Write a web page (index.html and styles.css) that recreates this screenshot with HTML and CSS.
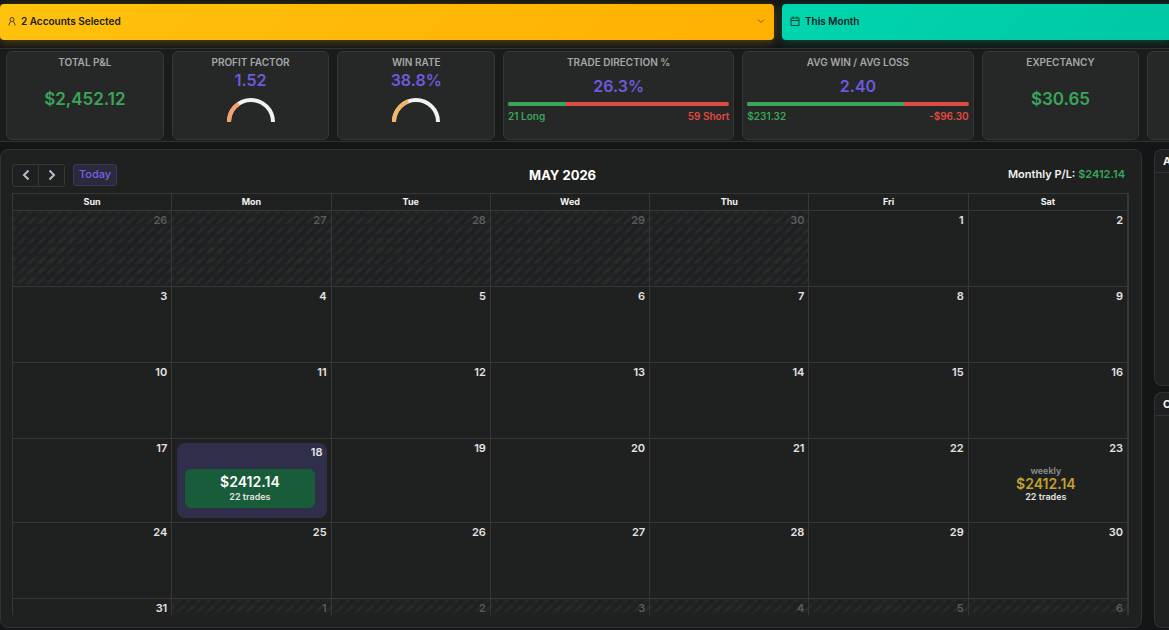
FILE: index.html
```html
<!DOCTYPE html>
<html lang="en">
<head>
  <meta charset="UTF-8">
  <meta name="viewport" content="width=device-width, initial-scale=1.0">
  <title>Trading Dashboard</title>
  <link rel="stylesheet" href="styles.css">
</head>
<body>

<div class="filters">
  <button class="filter accounts">
    <svg class="icon-user" viewBox="0 0 8 10"><circle cx="4" cy="3.500" r="2"/><path d="M1 9.500V8.500l1.500-3M7 9.500V8.500l-1.500-3"/></svg>
    <span>2 Accounts Selected</span>
    <svg class="icon-caret" viewBox="0 0 8 6"><path d="M1 1.500l3 3 3-3"/></svg>
  </button>
  <button class="filter period">
    <svg class="icon-calendar" viewBox="0 0 10 10"><path d="M1 2h8v7.500H1zM1 4.500h8M3 .5v2.500M7 .5v2.500"/></svg>
    <span>This Month</span>
  </button>
</div>

<div class="stats">
  <div class="stats-row">
    <div class="card">
      <div class="label">TOTAL P&amp;L</div>
      <div class="value big green">$2,452.12</div>
    </div>
    <div class="card">
      <div class="label">PROFIT FACTOR</div>
      <div class="value">1.52</div>
      <svg class="gauge" viewBox="0 0 48 25">
        <path class="track" d="M2 25A22 22 0 0 1 46 25"/>
        <path class="fill coral" pathLength="100" stroke-dasharray="31 100" d="M2 25A22 22 0 0 1 46 25"/>
      </svg>
    </div>
    <div class="card">
      <div class="label">WIN RATE</div>
      <div class="value">38.8%</div>
      <svg class="gauge" viewBox="0 0 48 25">
        <path class="track" d="M2 25A22 22 0 0 1 46 25"/>
        <path class="fill amber" pathLength="100" stroke-dasharray="38.8 100" d="M2 25A22 22 0 0 1 46 25"/>
      </svg>
    </div>
    <div class="card">
      <div class="label">TRADE DIRECTION %</div>
      <div class="value mid">26.3%</div>
      <div class="bar"><div class="bar-fill" style="width: 26.3%"></div></div>
      <div class="bar-labels"><span class="green">21 Long</span><span class="red">59 Short</span></div>
    </div>
    <div class="card">
      <div class="label">AVG WIN / AVG LOSS</div>
      <div class="value mid">2.40</div>
      <div class="bar"><div class="bar-fill" style="width: 70.6%"></div></div>
      <div class="bar-labels"><span class="green">$231.32</span><span class="red">-$96.30</span></div>
    </div>
    <div class="card">
      <div class="label">EXPECTANCY</div>
      <div class="value big green">$30.65</div>
    </div>
    <div class="card"></div>
  </div>
</div>

<div class="main">
  <div class="panel calendar">
    <div class="toolbar">
      <div class="nav">
        <div class="nav-group">
          <button aria-label="Previous month"><svg viewBox="0 0 8 12"><path d="M6.500 1.500L2 6l4.500 4.500"/></svg></button>
          <button aria-label="Next month"><svg viewBox="0 0 8 12"><path d="M1.500 1.500L6 6l-4.500 4.500"/></svg></button>
        </div>
        <button class="today">Today</button>
      </div>
      <h1>MAY 2026</h1>
      <div class="monthly">Monthly P/L: <span class="green">$2412.14</span></div>
    </div>

    <div class="month">
      <table>
        <thead>
          <tr><th>Sun</th><th>Mon</th><th>Tue</th><th>Wed</th><th>Thu</th><th>Fri</th><th>Sat</th></tr>
        </thead>
        <tbody>
          <tr><td class="other">26</td><td class="other">27</td><td class="other">28</td><td class="other">29</td><td class="other">30</td><td>1</td><td>2</td></tr>
          <tr><td>3</td><td>4</td><td>5</td><td>6</td><td>7</td><td>8</td><td>9</td></tr>
          <tr><td>10</td><td>11</td><td>12</td><td>13</td><td>14</td><td>15</td><td>16</td></tr>
          <tr class="tall">
            <td>17</td>
            <td class="active">
              <div class="day-box">
                18
                <div class="trades">
                  <strong>$2412.14</strong>
                  <span>22 trades</span>
                </div>
              </div>
            </td>
            <td>19</td><td>20</td><td>21</td><td>22</td>
            <td>
              23
              <div class="weekly">
                <span class="muted">weekly</span>
                <strong>$2412.14</strong>
                <span>22 trades</span>
              </div>
            </td>
          </tr>
          <tr><td>24</td><td>25</td><td>26</td><td>27</td><td>28</td><td>29</td><td>30</td></tr>
          <tr><td>31</td><td class="other">1</td><td class="other">2</td><td class="other">3</td><td class="other">4</td><td class="other">5</td><td class="other">6</td></tr>
        </tbody>
      </table>
    </div>
  </div>

  <div class="side">
    <div class="panel"><h2>A</h2></div>
    <div class="panel"><h2>C</h2></div>
  </div>
</div>

</body>
</html>
```

FILE: styles.css
```css
* {
  box-sizing: border-box;
}

body {
  margin: 0;
  height: 100vh;
  padding: 4px 0 2px;
  display: flex;
  flex-direction: column;
  overflow: hidden;
  background: #131616;
  color: #f2f2f2;
  font-family: Inter, "Liberation Sans", sans-serif;
  font-size: 11px;
}

button {
  font-family: inherit;
  cursor: pointer;
}

svg {
  fill: none;
  stroke: currentColor;
}

.green {
  color: #3aa65a;
}

.red {
  color: #e5483f;
}

/* Filters */
.filters {
  display: grid;
  grid-template-columns: 2fr 1fr;
  gap: 8px;
  margin-bottom: 8px;
}

.filter {
  display: flex;
  align-items: center;
  gap: 5px;
  height: 36px;
  padding: 0 8px 2px;
  border: none;
  color: #14201c;
  font-size: 10px;
  font-weight: 600;
}

.accounts {
  border-radius: 4px;
  background: linear-gradient(135deg, #ffc20d, #ffb000);
  box-shadow: 0 2px 10px rgba(255, 180, 0, 0.3);
}

.period {
  border-radius: 4px 0 0 4px;
  background: linear-gradient(135deg, #00d6ae, #00c8a4);
  box-shadow: 0 2px 10px rgba(0, 210, 170, 0.25);
}

.icon-user {
  width: 8px;
  height: 10px;
  opacity: 0.8;
}

.icon-calendar {
  width: 10px;
  height: 10px;
  opacity: 0.8;
}

.icon-caret {
  width: 8px;
  height: 6px;
  margin-left: auto;
  margin-right: 1px;
  opacity: 0.6;
}

/* Stats */
.stats {
  overflow: hidden;
  height: 94px;
  margin-bottom: 7px;
  border: 1px solid #303333;
  border-width: 1px 0;
  background: #1a1c1c;
}

.stats-row {
  display: grid;
  grid-template-columns: 15fr 15fr 15fr 22fr 22fr 15fr 15fr;
  gap: 8px;
  width: calc(100% + 142px);
  padding: 2px 6px;
}

.card {
  height: 89px;
  padding: 2px 4px;
  border: 1px solid #353838;
  border-radius: 6px;
  background: #262828;
  text-align: center;
}

.label {
  color: #a5a7a7;
  font-size: 10px;
  font-weight: 600;
  line-height: 16px;
}

.value {
  color: #6c5bdc;
  font-size: 16px;
  font-weight: 600;
  line-height: 20px;
}

.value.mid {
  padding: 6px 0;
}

.value.big {
  padding-top: 19px;
  font-size: 17px;
}

.value.green {
  color: #3aa65a;
}

.gauge {
  display: block;
  width: 48px;
  height: 25px;
  margin: 7px auto 0;
  stroke-width: 4;
}

.track {
  stroke: #f2f2f2;
}

.coral {
  stroke: #f5a06e;
}

.amber {
  stroke: #f3b763;
}

.bar {
  height: 4px;
  border-radius: 2px;
  overflow: hidden;
  background: #e04a44;
}

.bar-fill {
  height: 100%;
  background: #3aa65a;
}

.bar-labels {
  display: flex;
  justify-content: space-between;
  padding-top: 2px;
  font-size: 10px;
  font-weight: 600;
  line-height: 16px;
}

/* Main area */
.main {
  flex: 1;
  display: flex;
  gap: 12px;
  min-height: 0;
}

.panel {
  border: 1px solid #303333;
  border-radius: 8px;
  background: #1f2120;
}

.calendar {
  flex: 1;
  display: flex;
  flex-direction: column;
  padding: 13px 12px 12px 11px;
}

.toolbar {
  display: flex;
  justify-content: space-between;
  align-items: center;
  height: 24px;
  margin-bottom: 6px;
}

.nav {
  display: flex;
  gap: 8px;
}

.nav-group {
  display: flex;
  border: 1px solid #353838;
  border-radius: 3px;
}

.nav-group button {
  width: 25px;
  height: 21px;
  padding: 0;
  border: none;
  background: none;
  color: #b9b9d2;
}

.nav-group button + button {
  width: 26px;
  border-left: 1px solid #353838;
}

.nav-group svg {
  display: block;
  width: 8px;
  height: 12px;
  margin: 0 auto;
  stroke-width: 2;
}

.today {
  height: 22px;
  padding: 0 5px 2px;
  border: 1px solid #3b3955;
  border-radius: 3px;
  background: #2b2a3c;
  color: #7263e8;
  font-size: 11px;
  font-weight: 500;
}

h1 {
  margin: 0;
  color: #fff;
  font-size: 13px;
  font-weight: 700;
}

.monthly {
  padding: 0 4px 2px 0;
  font-weight: 600;
}

/* Month grid */
.month {
  flex: 1;
  min-height: 0;
  overflow: hidden;
  border-right: 1px solid #353838;
}

table {
  width: 100%;
  table-layout: fixed;
  border-collapse: collapse;
}

th,
td {
  border: 1px solid #353838;
}

th {
  height: 17px;
  padding: 0;
  font-size: 9px;
  font-weight: 700;
  line-height: 16px;
}

td {
  height: 76px;
  padding: 1px 4px;
  color: #e4e4e4;
  font-weight: 600;
  line-height: 16px;
  text-align: right;
  vertical-align: top;
}

.tall td {
  height: 84px;
}

/* diagonal stripes, broken into dashes by the horizontal bands */
.other {
  color: #5a5c5c;
  background:
    repeating-linear-gradient(0deg, rgba(30, 32, 33, 0.8) 0 2px, transparent 4px 8px, rgba(30, 32, 33, 0.8) 10px),
    repeating-linear-gradient(135deg, #1e2021 0 4px, #2a2c2c 4px 7px);
}

.tall .active {
  padding: 4px 4px 4px 5px;
}

.day-box {
  height: 75px;
  padding: 1px 4px 0 8px;
  border-radius: 8px;
  background: #302f4b;
}

.trades {
  display: flex;
  flex-direction: column;
  margin: 9px 8px 0 0;
  padding: 5px 0;
  border-radius: 6px;
  background: #195c39;
  text-align: center;
}

.trades strong,
.weekly strong {
  font-size: 14px;
  font-weight: 600;
  line-height: 16px;
}

.trades strong {
  color: #fff;
}

.trades span,
.weekly span {
  font-size: 9px;
  line-height: 13px;
}

.weekly {
  display: flex;
  flex-direction: column;
  margin-top: 8px;
  padding-right: 4px;
  text-align: center;
}

.weekly strong {
  line-height: 13px;
  color: #c4a02e;
}

.weekly .muted {
  color: #8d8f8f;
}

/* Side panels */
.side {
  display: flex;
  flex-direction: column;
  gap: 6px;
  width: 15px;
}

.side .panel {
  flex: 1;
  overflow: hidden;
  border-right: none;
  border-radius: 8px 0 0 8px;
}

h2 {
  margin: 0;
  padding-left: 8px;
  border-bottom: 1px solid #303333;
  font-size: 11px;
  font-weight: 700;
  line-height: 22px;
}
```
